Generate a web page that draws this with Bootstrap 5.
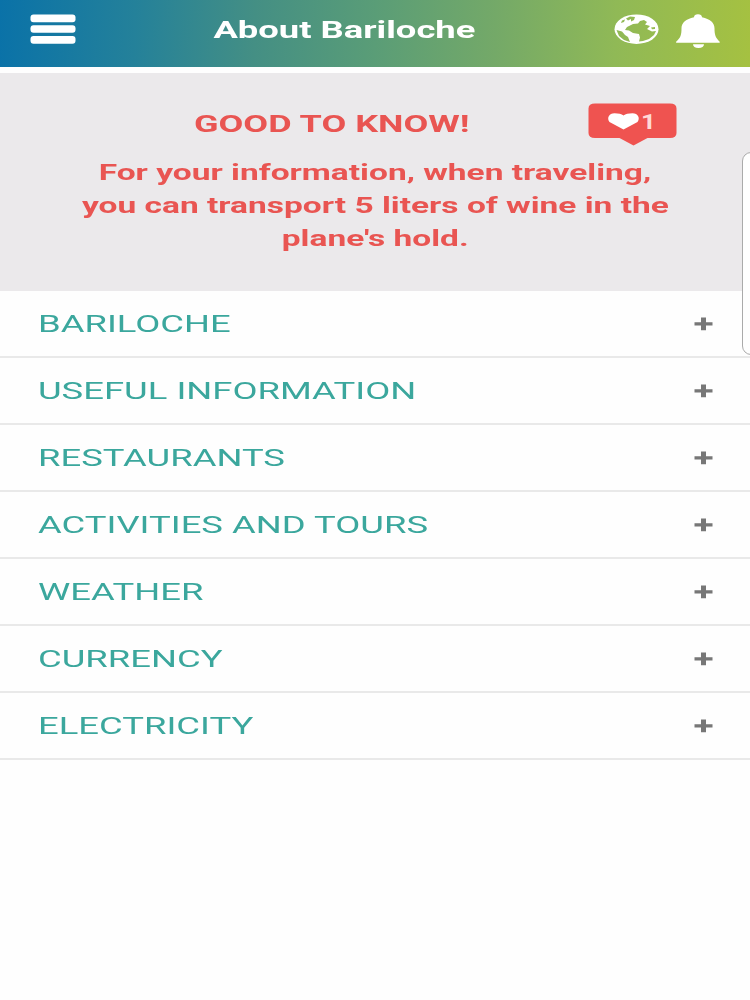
<!DOCTYPE html>
<html lang="en">
<head>
<meta charset="utf-8">
<meta name="viewport" content="width=device-width, initial-scale=1">
<title>About Bariloche</title>
<link href="https://cdn.jsdelivr.net/npm/bootstrap@5.3.0/dist/css/bootstrap.min.css" rel="stylesheet">
<style>
body{font-family:Roboto,"Liberation Sans",sans-serif;background:#fefefe;height:1000px;overflow:hidden}
.topbar{height:67px;background:linear-gradient(92deg,#0a72a8 0%,#24819a 18%,#448f84 34%,#5a9d77 50%,#74a968 66%,#90b956 82%,#a5c141 100%)}
.wide{display:inline-block;white-space:nowrap;transform:scaleX(var(--sx,1.487));line-height:1}
.from-left{transform-origin:0 50%}
.screen-title{font-size:24px;font-weight:700;--sx:1.516;margin-left:-3px}
.notice{height:218px;margin-top:6px;background:#ebe9eb;color:#e95552;font-weight:700}
.notice-title{font-size:24.5px;font-weight:700;--sx:1.47}
.notice-line{font-size:22.3px;height:32.8px;--sx:1.502;position:relative;top:1px}
.topic{height:66.95px;border-bottom:2px solid #e9e9e9;padding:2px 37px 0 37.5px}
.topic-name{font-size:24.5px;color:#3ba79d}
.likes{top:29px;left:588px}
.side-panel{top:152px;left:742px;width:30px;height:203px;border:1.5px solid #aaa;border-radius:9px;background:#fefefe}
</style>
</head>
<body class="position-relative">
<header class="topbar d-flex align-items-center text-white position-relative">
  <svg class="ms-4 mb-2" width="58" height="44" viewBox="24 7.500 58 44"><g fill="#fff"><rect x="30.500" y="14" width="45" height="7.700" rx="3"/><rect x="30.500" y="24.800" width="45" height="7.400" rx="3"/><rect x="30.500" y="35.500" width="45" height="7.700" rx="3"/></g></svg>
  <div class="flex-grow-1 text-center pb-1"><span class="wide screen-title">About Bariloche</span></div>
  <svg width="140" height="67" viewBox="610 0 140 67">
    <mask id="oceans" maskUnits="userSpaceOnUse" x="610" y="10" width="50" height="40">
      <rect x="610" y="10" width="50" height="40" fill="#fff"/>
      <path d="M644 20 L647 22 L645 24.500 L650 26 L647 29 L652 31.500 L656 31 L654 35 L649 39 L643 41 L639 41.500 L640 37.500 L639 34 L633 33 L629 30.500 L625 30 L627 27 L633 24 L638 23.500 L640 21Z"/>
      <path d="M616.500 30 L622 31.500 L625 35 L628 37 L630 42 L624 40 L619 36Z"/>
      <path d="M626 18.500 L630 16.500 L635 17 L634 20 L631 21.500 L631 19 L628 20.500Z"/>
      <path d="M622 20.500 L625 19.500 L624 22 L621 23Z"/>
      <path d="M651 27.500 L655 27 L655 29 L652 29.300Z"/>
    </mask>
    <ellipse cx="636.500" cy="29.200" rx="22" ry="14.800" fill="#fff" mask="url(#oceans)"/>
    <path fill="#fff" d="M698 14.200c2.500 0 4 1 4 3 8 1.600 12.500 5.600 12.500 11 0 6.500 1 9.500 5.200 13.500v1h-43.600v-1c4.600-4 5.400-7 5.400-13.500 0-5.400 4.500-9.400 12.500-11 0-2 1.500-3 4-3zM693 44.200h11c0 2.300-2 3.700-5.500 3.700s-5.500-1.400-5.500-3.700z"/>
  </svg>
</header>
<main>
  <section class="notice position-relative text-center">
    <div class="pt-4" style="padding-right:86px"><span class="wide notice-title" style="margin-top:15px">GOOD TO KNOW!</span></div>
    <div class="d-flex flex-column align-items-center mt-3">
      <div class="notice-line"><span class="wide">For your information, when traveling,</span></div>
      <div class="notice-line"><span class="wide">you can transport 5 liters of wine in the</span></div>
      <div class="notice-line"><span class="wide">plane's hold.</span></div>
    </div>
    <svg class="likes position-absolute" width="90" height="46" viewBox="588 102 90 46">
      <path fill="#ef5350" d="M595 103.500h75q6.500 0 6.500 5v24.500q0 5-6.500 5h-22.500l-14 7.500-14-7.500H595q-6.500 0-6.500-5v-24.500q0-5 6.500-5z"/>
      <path fill="#fff" d="M623.500 129.500l-14-7.500c-3-4-.5-8.800 5-8.800 4 0 7 .8 9 2.300 2-1.500 5-2.300 9-2.300 5.500 0 8 4.800 5 8.800z"/>
      <text x="641" y="129" font-size="21" fill="#ffd9d6" textLength="15" lengthAdjust="spacingAndGlyphs">1</text>
    </svg>
  </section>
  <section id="topics"></section>
</main>
<aside class="side-panel position-absolute"></aside>
<script>
document.getElementById('topics').innerHTML = ['BARILOCHE','USEFUL INFORMATION','RESTAURANTS','ACTIVITIES AND TOURS','WEATHER','CURRENCY','ELECTRICITY'].map(t =>
 `<div class="topic d-flex align-items-center justify-content-between"><span class="wide from-left topic-name">${t}</span><svg width="19" height="14" viewBox="0 0 19 14"><path d="M.5 5.300h6.500V0.500h5v4.800h6.500v3.200h-6.500v4.800h-5V8.500H.5z" fill="#777"/></svg></div>`).join('');
</script>
<script src="https://cdn.jsdelivr.net/npm/bootstrap@5.3.0/dist/js/bootstrap.bundle.min.js"></script>
</body>
</html>
